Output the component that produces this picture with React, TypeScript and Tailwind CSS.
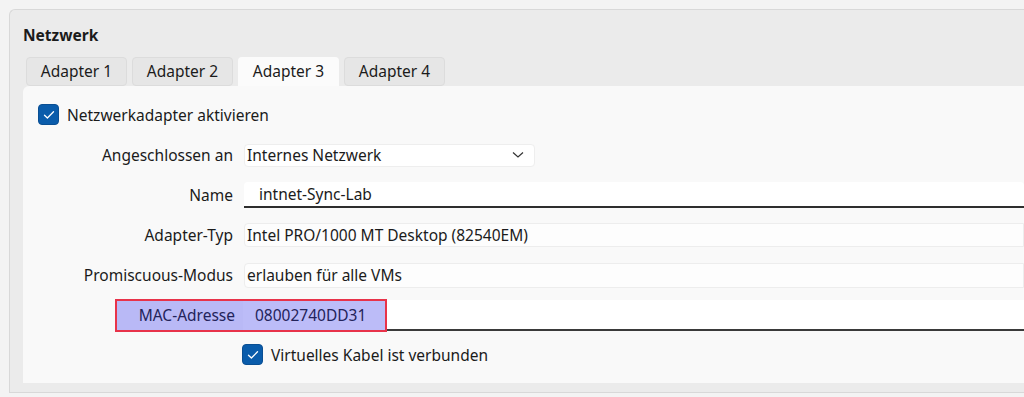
import React from "react"

const font = { fontFamily: '"Noto Sans", "Segoe UI", sans-serif' }

function Check() {
  return (
    <span className="flex h-[21px] w-[21px] items-center justify-center rounded-[4px] bg-[#0a5cab] border border-[#0a4f93]">
      <svg width="12" height="10" viewBox="0 0 12 10" fill="none">
        <path d="M1.5 5.2 L4.4 8 L10.5 1.8" stroke="white" strokeWidth="1.3" strokeLinecap="round" strokeLinejoin="round" />
      </svg>
    </span>
  )
}

function Row({ label, children }: { label: string; children: React.ReactNode }) {
  return (
    <div className="flex h-[40px] items-center">
      <div className="w-[233px] shrink-0 text-right">{label}</div>
      <div className="ml-[11px] flex-1">{children}</div>
    </div>
  )
}

export default function App() {
  const tabs = ["Adapter 1", "Adapter 2", "Adapter 3", "Adapter 4"]
  return (
    <div className="h-[397px] w-[1024px] overflow-hidden bg-[#f3f3f3] pl-[9px] pt-[9px] text-[15.5px] leading-[20px] text-[#1b1b1b]" style={font}>
      <div className="h-[384px] rounded-tl-[6px] border-l border-t border-b border-[#d8d8d8] bg-[#ebebeb] pl-[13px]">
        <div className="pt-[13px] text-[15.5px] font-bold leading-[24px]">Netzwerk</div>
        <div className="mt-[10px] flex gap-[5px] pl-[3px]">
          {tabs.map((t, i) => (
            <div
              key={t}
              className={
                i === 2
                  ? "flex h-[29px] w-[101px] items-center justify-center rounded-t-[4px] bg-[#fbfbfb] pb-[1px]"
                  : "flex h-[29px] w-[101px] items-center justify-center rounded-[4px] border border-[#dcdcdc] bg-[#e6e6e6] pb-[1px]"
              }
            >
              {t}
            </div>
          ))}
        </div>
        <div className="h-[297px] rounded-tl-[6px] bg-[#f9f9f9]">
          <div className="flex items-center gap-[8px] pl-[15px] pt-[18px]">
            <Check />
            <span>Netzwerkadapter aktivieren</span>
          </div>
          <div className="mt-[10px] -ml-[23px]">
            <Row label="Angeschlossen an">
              <div className="flex h-[23px] w-[291px] items-center justify-between rounded-[4px] border border-[#eeeeee] bg-white px-[2px]">
                <span>Internes Netzwerk</span>
                <svg width="12" height="8" viewBox="0 0 12 8" className="mr-[8px]">
                  <path d="M1 1.5 L6 6 L11 1.5" stroke="#333" strokeWidth="1.2" fill="none" />
                </svg>
              </div>
            </Row>
            <Row label="Name">
              <div className="flex h-[26px] items-center rounded-t-[4px] border-b-2 border-[#2e2e2e] bg-white pl-[15px]">
                intnet-Sync-Lab
              </div>
            </Row>
            <Row label="Adapter-Typ">
              <div className="flex h-[24px] items-center rounded-l-[4px] border border-[#ededed] bg-[#fdfdfd] pl-[2px]">
                Intel PRO/1000 MT Desktop (82540EM)
              </div>
            </Row>
            <Row label="Promiscuous-Modus">
              <div className="flex h-[25px] items-center rounded-l-[4px] border border-[#ededed] bg-[#fdfdfd] pl-[2px]">
                erlauben für alle VMs
              </div>
            </Row>
            <div className="flex h-[40px] items-center">
              <div className="ml-[115px] flex h-[33px] w-[272px] items-stretch border-2 border-[#e8334a] bg-[#b9b9f6] text-[#23235a]">
                <div className="flex w-[126px] items-center justify-end pr-[8px]">MAC-Adresse</div>
                <div className="flex flex-1 items-center bg-[#bcbcf8] pl-[12px]">08002740DD31</div>
              </div>
              <div className="h-[31px] flex-1 self-center border-b-2 border-[#3a3a3a] bg-white" />
            </div>
            <div className="flex items-center gap-[8px] pl-[242px] pt-[9px]">
              <Check />
              <span>Virtuelles Kabel ist verbunden</span>
            </div>
          </div>
        </div>
      </div>
    </div>
  )
}
